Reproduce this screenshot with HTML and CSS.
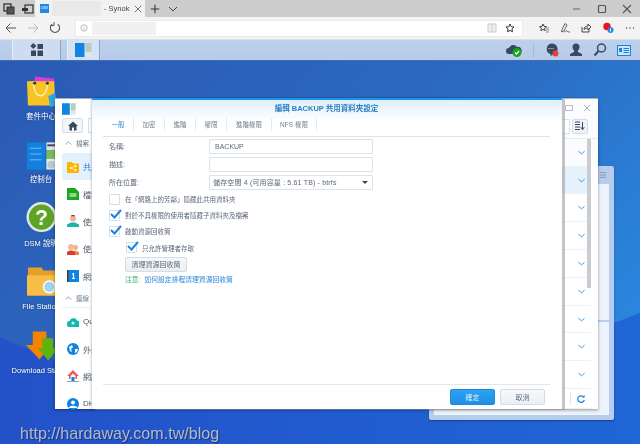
FILE: index.html
```html
<!DOCTYPE html>
<html lang="zh-Hant">
<head>
<meta charset="utf-8">
<title>編輯 BACKUP 共用資料夾設定</title>
<link rel="stylesheet" href="styles.css">
</head>
<body>
<div class="page">
  <header class="tabstrip">
    <div class="strip-left">
      <svg class="ico12" viewBox="0 0 12 12"><rect x="1" y="1" width="7" height="7" fill="#cfcfcf" stroke="#333" stroke-width="1.3"/><rect x="4" y="4" width="7" height="7" fill="#555" stroke="#333"/></svg>
      <svg class="ico12" viewBox="0 0 12 12"><rect x="3" y="2" width="8" height="8" fill="none" stroke="#333" stroke-width="1.2"/><rect x="0" y="5" width="6" height="3" fill="#333"/></svg>
    </div>
    <div class="tab">
      <span class="favicon">DSM</span>
      <span class="redact tab-redact"></span>
      <span class="tab-title">- Synok</span>
      <svg class="ico10" viewBox="0 0 10 10"><path d="M1 1l8 8M9 1l-8 8" stroke="#555" fill="none"/></svg>
    </div>
    <svg class="ico12 plus" viewBox="0 0 12 12"><path d="M6 0v12M0 6h12" stroke="#333" stroke-width="1.4"/></svg>
    <svg class="ico10 chev" viewBox="0 0 10 10"><path d="M1 3l4 4 4-4" stroke="#444" fill="none"/></svg>
    <div class="winctl">
      <svg class="ico10" viewBox="0 0 10 10"><path d="M1 5h7" stroke="#777" stroke-width="1.2"/></svg>
      <svg class="ico10" viewBox="0 0 10 10"><rect x="1.5" y="1.5" width="7" height="7" rx="1" fill="none" stroke="#555" stroke-width="1.2"/></svg>
      <svg class="ico10" viewBox="0 0 10 10"><path d="M1 1l8 8M9 1l-8 8" stroke="#555" stroke-width="1.1" fill="none"/></svg>
    </div>
  </header>

  <nav class="toolbar">
    <svg class="ico12" viewBox="0 0 12 12"><path d="M11 6H1M5.5 1.5L1 6l4.5 4.5" stroke="#555" fill="none"/></svg>
    <svg class="ico12" viewBox="0 0 12 12"><path d="M1 6h10M6.5 1.5L11 6l-4.5 4.5" stroke="#bbb" fill="none"/></svg>
    <svg class="ico12" viewBox="0 0 12 12"><path d="M8.8 2.2a4.6 4.6 0 1 1-5.6 0" stroke="#555" stroke-width="1.1" fill="none"/><path d="M5 0v3.5H1.5" stroke="#555" fill="none"/></svg>
    <div class="address">
      <svg class="ico8" viewBox="0 0 10 10"><circle cx="5" cy="5" r="4" stroke="#aaa" fill="none"/><path d="M5 4.5V8M5 2.5v1" stroke="#aaa"/></svg>
      <span class="redact addr-redact"></span>
      <svg class="ico10 addr-read" viewBox="0 0 10 10"><rect x="1" y="1" width="8" height="8" fill="#eee" stroke="#ccc"/><path d="M5 1v8" stroke="#ccc"/></svg>
      <svg class="ico10" viewBox="0 0 10 10"><path d="M5 1l1.2 2.7 2.8.3-2.1 1.9.6 2.9L5 7.4 2.5 8.8l.6-2.9L1 4l2.8-.3z" fill="none" stroke="#333"/></svg>
    </div>
    <div class="tools">
      <svg class="ico10" viewBox="0 0 10 10"><path d="M4 1l1 2.3 2.4.3-1.8 1.6.5 2.4L4 6.4 1.9 7.6l.5-2.4L.6 3.6 3 3.3z" fill="none" stroke="#444"/><path d="M7 5h3M7 7h3M7 9h3" stroke="#888"/></svg>
      <svg class="ico10" viewBox="0 0 10 10"><path d="M5 0.5L2 6.5 1.5 9 4 7.8 7 2zM4 9c2 0 1.500-2 3-1s1.500 1 3 1" fill="none" stroke="#555" stroke-width=".9"/></svg>
      <svg class="ico10" viewBox="0 0 10 10"><path d="M1 4v5h7V6M3 6.500C3 4 5 3 7 3V1l3 3-3 3V5C5.500 5 4 5.500 3 6.500z" fill="none" stroke="#444"/></svg>
      <svg class="ico12" viewBox="0 0 12 12"><circle cx="5" cy="4.500" r="3.700" fill="#e8141c"/><circle cx="8.500" cy="8" r="3" fill="#2b87e3"/><path d="M8.500 6.500v3" stroke="#fff"/></svg>
      <svg class="ico10" viewBox="0 0 10 10"><circle cx="1.500" cy="5" r=".7" fill="#444"/><circle cx="5" cy="5" r=".7" fill="#444"/><circle cx="8.500" cy="5" r=".7" fill="#444"/></svg>
    </div>
  </nav>

  <div class="taskbar">
    <div class="task-btn task-main">
      <svg class="ico14" viewBox="0 0 14 14"><path d="M3.300 0l3 3-3 3-3-3z" fill="#39485a"/><rect x="7.500" y="1" width="5.500" height="5" fill="#39485a"/><rect x="1" y="7.500" width="5" height="5.500" fill="#39485a"/><rect x="7.500" y="7.500" width="5.500" height="5.500" fill="#39485a"/></svg>
    </div>
    <div class="task-btn task-app">
      <svg class="ico17" viewBox="0 0 17 14"><rect x="0" y="0" width="9.500" height="14" fill="#1284e4"/><rect x="10.500" y="0" width="6" height="9" fill="#b9ccc0"/><rect x="10.500" y="9.500" width="6" height="4.500" fill="#e6e6e6"/></svg>
    </div>
    <div class="task-right">
      <svg class="cloud" viewBox="0 0 16 14"><path d="M3 11a3 3 0 0 1 0-6 4.500 4.500 0 0 1 8-1 3.500 3.500 0 0 1 2 7z" fill="#39485a"/><circle cx="11" cy="9.500" r="4.500" fill="#18a620"/><path d="M9 9.500l1.500 1.500L13 8" stroke="#fff" stroke-width="1.200" fill="none"/></svg>
      <span class="task-sep"></span>
      <svg class="ico14" viewBox="0 0 14 14"><path d="M6.500 0.500a6 5.500 0 0 1 3 10.300L5.500 13v-2a6 5.500 0 0 1 1-10.500z" fill="#39485a"/><path d="M3.500 5.500h6" stroke="#cdd" stroke-dasharray="1 1"/><circle cx="10.500" cy="10.500" r="3" fill="#f0393c"/></svg>
      <svg class="ico14" viewBox="0 0 14 14"><circle cx="7" cy="4" r="3.500" fill="#39485a"/><path d="M5 7h4v2l4 2v2H1v-2l4-2z" fill="#39485a"/></svg>
      <svg class="ico14" viewBox="0 0 14 14"><circle cx="8.500" cy="5" r="4" fill="none" stroke="#39485a" stroke-width="1.500"/><path d="M5.500 8L1.500 12.500" stroke="#39485a" stroke-width="2"/></svg>
      <svg class="idcard" viewBox="0 0 14 11"><rect x=".5" y=".5" width="13" height="10" fill="#cfe3f6" stroke="#1585e0"/><rect x="2" y="3" width="3" height="4" fill="#1585e0"/><path d="M6.500 3.500H12M6.500 5.500H12M6.500 7.500H12" stroke="#1585e0"/></svg>
    </div>
  </div>

  <main class="desktop">
    <svg class="wallpaper" viewBox="0 0 640 383" preserveAspectRatio="none">
      <defs>
        <linearGradient id="wallA" x1="0" y1="0" x2="1" y2=".6">
          <stop offset="0" stop-color="#2b5ab4"/>
          <stop offset=".55" stop-color="#2c69c1"/>
          <stop offset="1" stop-color="#2a85dc"/>
        </linearGradient>
        <linearGradient id="wallB" x1="0" y1="0" x2="1" y2="0">
          <stop offset="0" stop-color="#2351c8"/>
          <stop offset="1" stop-color="#1f66d6"/>
        </linearGradient>
      </defs>
      <rect width="640" height="383" fill="url(#wallA)"/>
      <path d="M0 276C120 330 200 340 330 335 450 325 540 290 640 252V383H0z" fill="url(#wallB)"/>
    </svg>

    <div class="icons">
      <div class="dicon">
        <svg class="dicon-art" viewBox="0 0 32 32"><path d="M3 5l26-1 1 24H3z" fill="#36b6e6"/><path d="M9 0l20 2v6H9z" fill="#d93bd6"/><path d="M1 5h28l1 25H2z" fill="#f7c325"/><path d="M8 8c0 16 14 16 14 0" fill="none" stroke="#fff3c0" stroke-width="1.400"/><circle cx="9" cy="7" r="1.500" fill="#333"/><circle cx="22" cy="7" r="1.500" fill="#333"/><path d="M23 20l7-3 2 12-7 3z" fill="#2fa5e0"/></svg>
        <span class="dicon-label">套件中心</span>
      </div>
      <div class="dicon">
        <svg class="dicon-art" viewBox="0 0 32 32"><rect x="1" y="3" width="19" height="28" fill="#1280dc"/><path d="M4 9h12M4 15h12M4 21h12" stroke="#6fc0f5"/><rect x="21" y="3" width="10" height="8" fill="#dfe5e6"/><path d="M22 6h8" stroke="#445" stroke-width="2"/><rect x="21" y="11" width="10" height="9" fill="#79bb5c"/><rect x="21" y="20" width="10" height="11" fill="#e6edf0"/><circle cx="26" cy="26" r="4" fill="#bcc8cf"/></svg>
        <span class="dicon-label">控制台</span>
      </div>
      <div class="dicon">
        <svg class="dicon-art" viewBox="0 2 32 32"><circle cx="16" cy="16" r="15.500" fill="#dfe6e8"/><circle cx="16" cy="16" r="13" fill="#5da423"/><text class="help-mark" x="16" y="24" text-anchor="middle">?</text></svg>
        <span class="dicon-label">DSM 說明</span>
      </div>
      <div class="dicon">
        <svg class="dicon-art" viewBox="0 0 32 32"><path d="M2 1h14l2 3h12v26H2z" fill="#e5a028"/><path d="M1 9h30v21H1z" fill="#f6bd48"/><circle cx="24" cy="21" r="6" fill="#9fd5f4" stroke="#fff" stroke-width="1.500"/></svg>
        <span class="dicon-label">File Station</span>
      </div>
      <div class="dicon">
        <svg class="dicon-art" viewBox="0 0 32 32"><path d="M7 1h14v12h6L14 30 0 15h7z" fill="#f58200"/><path d="M17 8h11v10h5L23 31 12 18h5z" fill="#5fb40c"/></svg>
        <span class="dicon-label">Download Station</span>
      </div>
    </div>

    <section class="window window-back">
      <div class="back-head"><svg class="ico8" viewBox="0 0 10 10"><path d="M1 2h8M1 5h8M1 8h8" stroke="#7a8ea8"/></svg></div>
      <div class="back-pane"></div>
      <div class="back-pane back-pane-low"></div>
    </section>

    <section class="window window-panel">
      <aside class="side">
        <svg class="side-logo" viewBox="0 0 17 14"><rect width="9.500" height="14" fill="#1284e4"/><rect x="10.500" width="6" height="9" fill="#b9ccc0"/><rect x="10.500" y="9.500" width="6" height="4.500" fill="#e6e6e6"/></svg>
        <div class="side-tools">
          <button class="home"><svg class="ico10" viewBox="0 0 10 10"><path d="M5 .5L0 5h1.500v4.500H4V6.500h2v3h2.500V5H10z" fill="#39485a"/></svg></button>
          <span class="search-stub"></span>
        </div>
        <div class="side-section"><svg class="chev-up" viewBox="0 0 8 5"><path d="M.5 4.500L4 1l3.500 3.500" stroke="#6f8ba8" fill="none"/></svg>檔案</div>
        <ul class="side-list side-list-main">
          <li class="side-item selected"><svg class="ico12" viewBox="0 0 12 12"><path d="M0 1h5l1 1.500h6V12H0z" fill="#ffb400"/><circle cx="4" cy="7" r="1" fill="#fff"/><circle cx="8.500" cy="5" r="1" fill="#fff"/><circle cx="8.500" cy="9" r="1" fill="#fff"/><path d="M4 7l4.500-2M4 7l4.500 2" stroke="#fff" stroke-width=".6"/></svg><span>共用資料夾</span></li>
          <li class="side-item"><svg class="ico12" viewBox="0 0 12 12"><path d="M0 0h8l4 4v8H0z" fill="#1ea81e"/><path d="M2.500 6h7M9.500 8h-7" stroke="#fff"/></svg><span>檔案服務</span></li>
          <li class="side-item"><svg class="ico12" viewBox="0 0 12 12"><circle cx="6" cy="3.500" r="3" fill="#f0b48f"/><path d="M4 1.200l4 0-.5-1.200h-3z" fill="#7a4620"/><path d="M0 12V9.500L4 7.500h4l4 2V12z" fill="#1ab5ae"/></svg><span>使用者</span></li>
          <li class="side-item"><svg class="ico12" viewBox="0 0 12 12"><circle cx="8.500" cy="4.500" r="2.500" fill="#eeb48c"/><path d="M5 12V9l3-1.500 4 1.500v3z" fill="#e88a3e"/><circle cx="4" cy="4" r="3" fill="#f2bb92"/><path d="M0 12V9l2.500-1.500h3L8 9v3z" fill="#e03a30"/></svg><span>使用者群組</span></li>
          <li class="side-item"><svg class="ico12" viewBox="0 0 12 12"><rect x="0" y="0" width="12" height="12" fill="#1282e0"/><rect x="0" y="0" width="1.500" height="12" fill="#33414f"/><path d="M6.500 3v5.500M5 8.500h3M5 4h1.500" stroke="#fff" stroke-width="1.200"/></svg><span>網域/LDAP</span></li>
        </ul>
        <div class="side-section side-section-2"><svg class="chev-up" viewBox="0 0 8 5"><path d="M.5 4.500L4 1l3.500 3.500" stroke="#6f8ba8" fill="none"/></svg>連線</div>
        <ul class="side-list">
          <li class="side-item"><svg class="ico12" viewBox="0 0 12 12"><path d="M3 11a3 3 0 0 1-.5-6 4 4 0 0 1 7.500-.5 3.200 3.200 0 0 1-.5 6.500z" fill="#12b9b0"/><circle cx="6" cy="7" r="1.500" fill="#fff"/></svg><span>QuickConnect</span></li>
          <li class="side-item"><svg class="ico12" viewBox="0 0 12 12"><circle cx="6" cy="6" r="6" fill="#1282e0"/><path d="M2 4l3-2 1 2-2 2 1 3-2-1zM8 6l3 0-1 3-2 1z" fill="#fff"/></svg><span>外部存取</span></li>
          <li class="side-item"><svg class="ico12" viewBox="0 0 12 12"><path d="M6 0L0 6h2v3h8V6h2z" fill="#ee5a55"/><path d="M3.500 6L6 3.500 8.500 6v3h-5z" fill="#f3f6f8"/><rect x="4.500" y="7" width="3" height="4" fill="#1282e0"/><path d="M0 11.500h12" stroke="#8aa" /></svg><span>網路</span></li>
          <li class="side-item"><svg class="ico12" viewBox="0 0 12 12"><circle cx="6" cy="6" r="6" fill="#1282e0"/><circle cx="6" cy="4.500" r="2" fill="#fff"/><path d="M1.500 10c1-3 8-3 9 0" fill="#fff"/></svg><span>DHCP Server</span></li>
        </ul>
      </aside>
      <div class="panel-right">
        <div class="panel-top">
          <svg class="ico8" viewBox="0 0 8 8"><rect x=".5" y="1.500" width="7" height="5" fill="none" stroke="#bbc"/></svg>
          <svg class="ico8" viewBox="0 0 8 8"><path d="M1 1l6 6M7 1L1 7" stroke="#aab" fill="none"/></svg>
        </div>
        <div class="panel-sort"><span class="sort-stub"></span><span class="sort-btn"><svg class="ico10" viewBox="0 0 10 10"><path d="M0 1h5M0 3.500h5M0 6h5M0 8.500h5" stroke="#39485a"/><path d="M7.500 1v7M5.800 6.200l1.700 2.500 1.700-2.500" stroke="#39485a" fill="none"/></svg></span></div>
        <div class="rows">
          <div class="row"><svg class="chev-down" viewBox="0 0 8 5"><path d="M.5 1L4 4l3.500-3" stroke="#2d94ec" stroke-width="1.100" fill="none"/></svg></div>
          <div class="row row-on"><svg class="chev-down" viewBox="0 0 8 5"><path d="M.5 1L4 4l3.500-3" stroke="#2d94ec" stroke-width="1.100" fill="none"/></svg></div>
          <div class="row"><svg class="chev-down" viewBox="0 0 8 5"><path d="M.5 1L4 4l3.500-3" stroke="#2d94ec" stroke-width="1.100" fill="none"/></svg></div>
          <div class="row"><svg class="chev-down" viewBox="0 0 8 5"><path d="M.5 1L4 4l3.500-3" stroke="#2d94ec" stroke-width="1.100" fill="none"/></svg></div>
          <div class="row"><svg class="chev-down" viewBox="0 0 8 5"><path d="M.5 1L4 4l3.500-3" stroke="#2d94ec" stroke-width="1.100" fill="none"/></svg></div>
          <div class="row"><svg class="chev-down" viewBox="0 0 8 5"><path d="M.5 1L4 4l3.500-3" stroke="#2d94ec" stroke-width="1.100" fill="none"/></svg></div>
          <div class="row"><svg class="chev-down" viewBox="0 0 8 5"><path d="M.5 1L4 4l3.500-3" stroke="#2d94ec" stroke-width="1.100" fill="none"/></svg></div>
          <div class="row"><svg class="chev-down" viewBox="0 0 8 5"><path d="M.5 1L4 4l3.500-3" stroke="#2d94ec" stroke-width="1.100" fill="none"/></svg></div>
          <div class="row"><svg class="chev-down" viewBox="0 0 8 5"><path d="M.5 1L4 4l3.500-3" stroke="#2d94ec" stroke-width="1.100" fill="none"/></svg></div>
          <span class="scrollbar"></span>
        </div>
        <div class="panel-foot"><span class="foot-sep"></span><svg class="ico8" viewBox="0 0 8 8"><path d="M6.800 2.200A3.300 3.300 0 1 0 7.300 5" stroke="#1f86dc" stroke-width="1.300" fill="none"/><path d="M4.800 2.500h2.800V0z" fill="#1f86dc"/></svg></div>
      </div>
    </section>

    <section class="dialog">
      <h1 class="dialog-title">編輯 BACKUP 共用資料夾設定</h1>
      <div class="tabs">
        <span class="dtab dtab-on">一般</span>
        <span class="dtab">加密</span>
        <span class="dtab">進階</span>
        <span class="dtab">權限</span>
        <span class="dtab dtab-wide">進階權限</span>
        <span class="dtab dtab-wide">NFS 權限</span>
      </div>
      <form class="dialog-body">
        <div class="field"><label class="field-label">名稱:</label><div class="input">BACKUP</div></div>
        <div class="field"><label class="field-label">描述:</label><div class="input"></div></div>
        <div class="field"><label class="field-label">所在位置:</label><div class="input input-select">儲存空間 4 (可用容量 : 5.61 TB) - btrfs<i class="caret"></i></div></div>
        <div class="check"><span class="box"></span>在「網路上的芳鄰」隱藏此共用資料夾</div>
        <div class="check"><span class="box"><svg class="tick" viewBox="0 0 12 10"><path d="M1 5l3.500 3.500L11 1" stroke="#1684e6" stroke-width="2" fill="none"/></svg></span>對於不具權限的使用者隱藏子資料夾及檔案</div>
        <div class="check"><span class="box"><svg class="tick" viewBox="0 0 12 10"><path d="M1 5l3.500 3.500L11 1" stroke="#1684e6" stroke-width="2" fill="none"/></svg></span>啟動資源回收筒</div>
        <div class="check check-sub"><span class="box"><svg class="tick" viewBox="0 0 12 10"><path d="M1 5l3.500 3.500L11 1" stroke="#1684e6" stroke-width="2" fill="none"/></svg></span>只允許管理者存取</div>
        <button type="button" class="btn btn-clean">清理資源回收筒</button>
        <p class="note"><span class="note-key">注意:</span><span class="note-link">如何設定排程清理資源回收筒</span></p>
      </form>
      <footer class="dialog-foot">
        <button type="button" class="btn btn-ok">確定</button>
        <button type="button" class="btn btn-cancel">取消</button>
      </footer>
    </section>

    <div class="watermark">http://hardaway.com.tw/blog</div>
  </main>
</div>
</body>
</html>
```

FILE: styles.css
```css
* { box-sizing: border-box; }
html, body { margin: 0; padding: 0; }
body {
  width: 640px;
  height: 444px;
  overflow: hidden;
  font-family: "Liberation Sans", "Noto Sans CJK TC", sans-serif;
  color: #3d4c5c;
}
.page {
  width: 640px;
  height: 444px;
  display: flex;
  flex-direction: column;
  overflow: hidden;
  filter: blur(0.35px);
}
svg { display: block; flex: none; }
.ico8 { width: 8px; height: 8px; }
.ico10 { width: 10px; height: 10px; }
.ico12 { width: 12px; height: 12px; }
.ico14 { width: 14px; height: 14px; }
.ico17 { width: 17px; height: 14px; }

/* browser */
.tabstrip {
  height: 17px;
  flex: none;
  display: flex;
  align-items: center;
  background: #cdcdcd;
}
.strip-left { display: flex; gap: 7px; padding-left: 3px; width: 35px; }
.tab {
  width: 110px;
  height: 17px;
  background: #f2f2f2;
  display: flex;
  align-items: center;
  padding-left: 5px;
}
.favicon {
  width: 9px;
  height: 9px;
  background: #1f8ae8;
  color: #fff;
  font-size: 3px;
  line-height: 9px;
  text-align: center;
  flex: none;
}
.redact { display: block; background: #e9e9e9; }
.tab-redact { width: 49px; height: 15px; margin-left: 3px; }
.tab-title { width: 30px; margin-left: 3px; font-size: 7.5px; color: #444; white-space: nowrap; flex: none; }
.tab .ico10 { margin-left: -1px; transform: scale(.8); }
.plus { margin-left: 4px; transform: scale(.75); }
.chev { margin-left: 7px; }
.winctl { margin-left: auto; display: flex; gap: 15px; padding-right: 8px; }

.toolbar {
  height: 23px;
  flex: none;
  display: flex;
  align-items: center;
  background: #f3f3f3;
  border-bottom: 1px solid #dcdfe4;
  padding-left: 5px;
  gap: 10px;
}
.address {
  width: 448px;
  height: 17px;
  margin-left: 4px;
  background: #fff;
  border: 1px solid #ececec;
  display: flex;
  align-items: center;
  padding: 0 7px 0 4px;
}
.addr-redact { width: 64px; height: 13px; margin-left: 4px; background: #f0f0f0; }
.addr-read { margin-left: auto; margin-right: 8px; }
.tools { display: flex; align-items: center; gap: 11px; margin-left: 6px; }

.taskbar {
  height: 21px;
  flex: none;
  display: flex;
  align-items: stretch;
  background: linear-gradient(#bdd0ec, #b7cbe9);
  border-bottom: 1px solid #3f6eb6;
  padding-left: 12px;
  gap: 6px;
}
.task-btn {
  display: flex;
  align-items: center;
  justify-content: center;
  background: #cddcf0;
  border-left: 1px solid #e4ecf7;
  border-right: 1px solid #8ba3c4;
}
.task-main { width: 49px; }
.task-app { width: 33px; background: #d5e2f3; }
.task-right { margin-left: auto; display: flex; align-items: center; gap: 10px; padding-right: 9px; }
.cloud { width: 16px; height: 14px; margin-right: 2px; }
.task-sep { width: 1px; height: 15px; background: #a5b8d4; margin: 0 1px 0 -1px; }
.idcard { width: 14px; height: 11px; }

/* desktop */
.desktop { position: relative; flex: 1; overflow: hidden; }
.wallpaper { position: absolute; inset: 0; width: 640px; height: 383px; }
.icons {
  position: absolute;
  left: 1px;
  top: 15px;
  width: 80px;
  display: flex;
  flex-direction: column;
}
.dicon {
  height: 63.4px;
  display: flex;
  flex-direction: column;
  align-items: center;
}
.dicon-art { width: 31px; height: 32px; overflow: visible; }
.dicon-label {
  font-size: 7.5px;
  line-height: 10px;
  margin-top: 4px;
  color: #fff;
  white-space: nowrap;
  text-shadow: 0 0 2px #123a78;
}
.help-mark { font: bold 22px "Liberation Sans", sans-serif; fill: #fff; }

.window { position: absolute; background: #fff; }
.window-back {
  left: 429px;
  top: 105px;
  width: 185px;
  height: 254px;
  background: #b7cdee;
  border-radius: 2px;
  box-shadow: 0 1px 2px rgba(0, 0, 0, .35);
  padding: 0 5px 5px 5px;
}
.back-head { height: 18px; display: flex; justify-content: flex-end; align-items: center; padding-right: 2px; }
.back-pane { height: 136px; background: #ecf3fc; }
.back-pane-low { margin-top: 2px; height: 93px; }

.window-panel {
  left: 55px;
  top: 37px;
  width: 543px;
  height: 311px;
  display: flex;
  background: rgba(255, 255, 255, .98);
  box-shadow: 0 1px 3px rgba(0, 0, 0, .4);
  border-top: 1px solid #a4b2c6;
}
.side { width: 37px; flex: none; padding-left: 7px; background: #fff; }
.side-logo { margin-top: 4px; width: 14px; height: 12px; }
.side-tools { display: flex; gap: 5px; margin-top: 3px; }
.home {
  width: 21px;
  height: 15px;
  padding: 0;
  background: #f3f6fa;
  border: 1px solid #d5dde7;
  border-radius: 2px;
  display: flex;
  align-items: center;
  justify-content: center;
  flex: none;
}
.search-stub { width: 12px; height: 15px; border: 1px solid #d5dde7; flex: none; }
.side-section {
  margin-top: 2px;
  height: 16px;
  display: flex;
  align-items: center;
  gap: 4px;
  font-size: 6.5px;
  color: #6b7f95;
  white-space: nowrap;
  padding-left: 3px;
}
.side-section-2 { margin-top: 0; height: 18px; border-bottom: 1px solid #eef1f4; }
.chev-up { width: 7px; height: 4px; }
.side-list { list-style: none; margin: 0; padding: 0; }
.side-list-main { margin-top: 2px; }
.side-item {
  height: 27.4px;
  width: 40px;
  display: flex;
  align-items: center;
  gap: 4px;
  padding-left: 5px;
  font-size: 8px;
  color: #4c5b6b;
  white-space: nowrap;
}
.selected { background: #e3f1fc; color: #1a86df; border-radius: 2px 0 0 2px; }

.panel-right { position: relative; flex: 1; margin-left: 470px; display: flex; flex-direction: column; min-width: 0; }
.panel-top { height: 19px; display: flex; align-items: center; gap: 10px; padding-left: 3px; }
.panel-sort { height: 17px; display: flex; align-items: center; gap: 2px; }
.sort-stub { width: 8px; height: 15px; border: 1px solid #dbe2e9; border-left: 0; background: #fff; }
.sort-btn {
  width: 16px;
  height: 15px;
  background: #eef3f9;
  border: 1px solid #d3dde9;
  border-radius: 2px;
  display: flex;
  align-items: center;
  justify-content: center;
}
.rows { position: relative; margin-top: 3px; flex: 1; border-top: 1px solid #e6ebf0; }
.row {
  height: 27.8px;
  width: 29px;
  border-bottom: 1px solid #eff2f5;
  display: flex;
  align-items: center;
  justify-content: flex-end;
  padding-right: 6px;
}
.row-on { background: #e5f2fd; }
.chev-down { width: 7px; height: 5px; }
.scrollbar { position: absolute; left: 25px; top: 0; width: 4px; height: 149px; background: #c9cdd1; }
.panel-foot {
  height: 20px;
  width: 29px;
  display: flex;
  align-items: center;
  justify-content: space-between;
  padding: 0 6px 0 8px;
  border-bottom: 1px solid #eef1f4;
}
.foot-sep { width: 1px; height: 11px; background: #d8e0e8; }

/* dialog */
.dialog {
  position: absolute;
  left: 92px;
  top: 37px;
  width: 470px;
  height: 311px;
  display: flex;
  flex-direction: column;
  background: linear-gradient(#e0effb 0, #fff 22px);
  border-top: 2px solid #1795ee;
  box-shadow: 3px 1px 0 rgba(150, 150, 150, .55), -1px 0 2px rgba(0, 0, 0, .2);
  padding: 0 12px 0 11px;
}
.dialog-title {
  margin: 2px 0 0;
  height: 13px;
  font-size: 7.5px;
  line-height: 13px;
  font-weight: 700;
  color: #2a80c6;
  text-align: center;
}
.tabs {
  display: flex;
  height: 19px;
  align-items: center;
  border-bottom: 1px solid #dfe3e8;
  box-sizing: content-box;
  padding-bottom: 2px;
}
.dtab {
  width: 31px;
  height: 13px;
  font-size: 6.5px;
  line-height: 13px;
  text-align: center;
  border-right: 1px solid #e6e9ed;
  color: #6f7e8d;
  white-space: nowrap;
}
.dtab-on { color: #2a88d8; }
.dtab-wide { width: 45px; }
.dialog-body { flex: 1; padding: 0 0 0 6px; }
.field { height: 18px; display: flex; align-items: center; }
.field-label { width: 100px; font-size: 7px; color: #5b6876; }
.input {
  width: 164px;
  height: 15px;
  border: 1px solid #dbe2e9;
  border-radius: 1px;
  font-size: 7px;
  line-height: 13px;
  padding-left: 5px;
  color: #5b6876;
  background: #fff;
  position: relative;
}
.input-select { padding-left: 3px; letter-spacing: .16px; white-space: nowrap; }
.caret {
  position: absolute;
  right: 4px;
  top: 5px;
  border: 3px solid transparent;
  border-top: 3px solid #3a4755;
  border-bottom: 0;
}
.check {
  display: flex;
  align-items: center;
  gap: 5px;
  font-size: 6.5px;
  height: 16.2px;
  color: #5b6876;
}
.box {
  width: 11px;
  height: 11px;
  border: 1px solid #d6dde5;
  border-radius: 1px;
  background: #fff;
  position: relative;
  flex: none;
}
.tick { position: absolute; left: 0; top: -2px; width: 12px; height: 10px; }
.check-sub { margin-left: 17px; }
.btn {
  display: block;
  padding: 0;
  font-family: inherit;
  font-size: 7px;
  border-radius: 2px;
  border: 1px solid #d4dce5;
  background: linear-gradient(#f7f9fb, #eaeff4);
  color: #5b6876;
}
.btn-clean { width: 62px; height: 15px; margin: 1px 0 0 16px; }
.note { margin: 2px 0 0 16px; font-size: 6.8px; line-height: 12px; display: flex; gap: 4px; }
.note-key { color: #3cb371; }
.note-link { color: #2a88d8; }
.dialog-foot {
  height: 25px;
  flex: none;
  border-top: 1px solid #e4e7ea;
  display: flex;
  justify-content: flex-end;
  gap: 5px;
  padding: 4px 5px 0 0;
}
.btn-ok, .btn-cancel { width: 45px; height: 16px; }
.btn-ok { background: linear-gradient(#2ba2f2, #1f8fe6); border-color: #1d8ae0; color: #dff0fd; }

.watermark {
  position: absolute;
  left: 20px;
  top: 360px;
  font-family: "Liberation Sans", sans-serif;
  font-size: 16.1px;
  line-height: 24px;
  color: rgba(205, 205, 205, .85);
  text-shadow: 1px 1px 1px rgba(20, 30, 70, .6);
  white-space: nowrap;
}
```
